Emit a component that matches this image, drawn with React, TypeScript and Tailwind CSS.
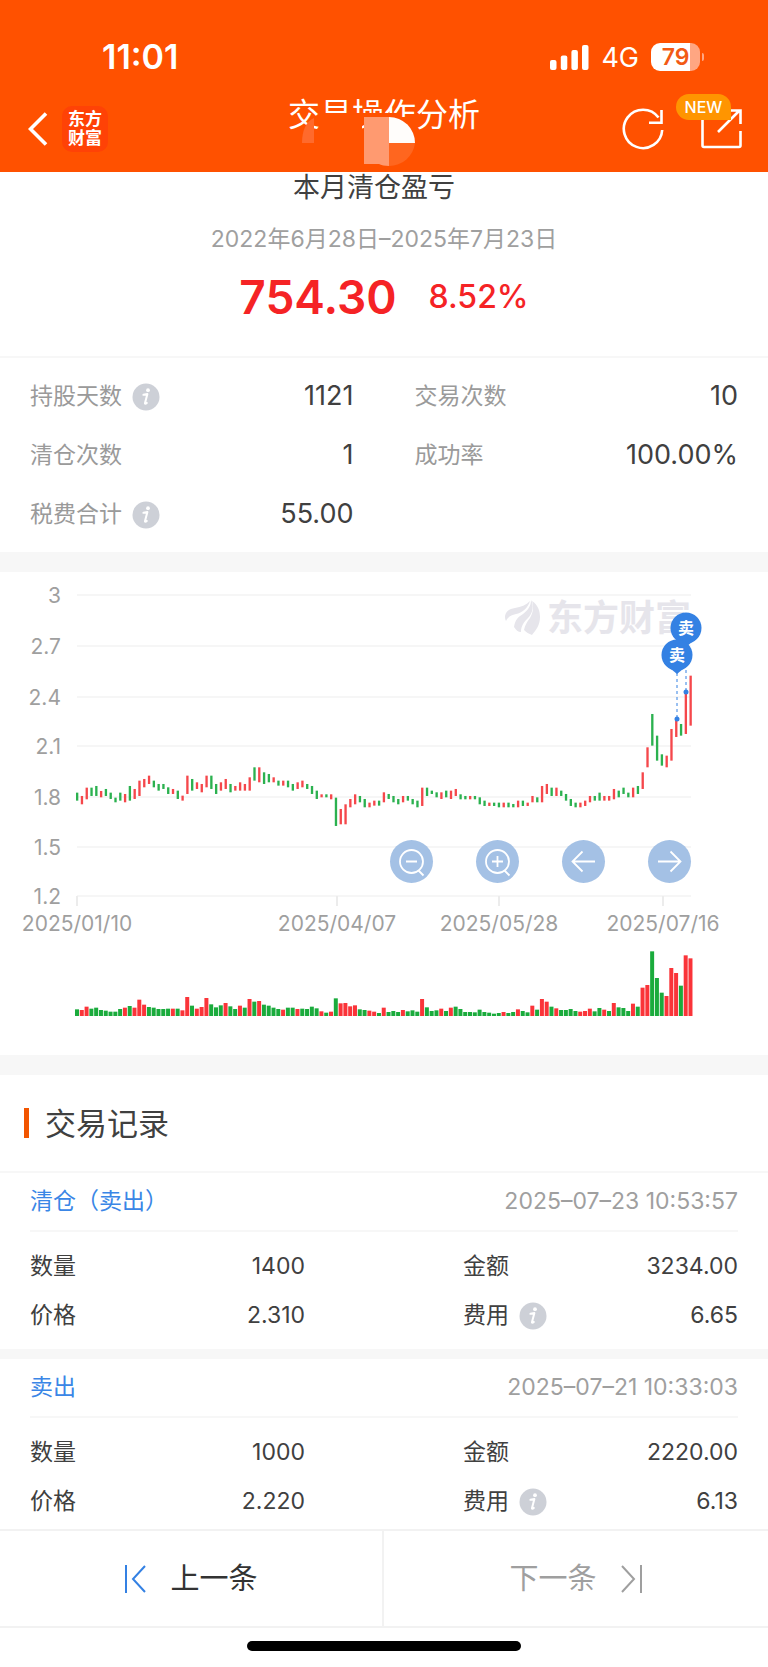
import type { ReactNode } from "react";

type Bar = [high: number, low: number, volume: number];

// y positions of high / low and volume height, one entry per trading day, in chart units
const BARS: Bar[] = [
  [668, 692, 20], [678, 703, 18], [653, 688, 28], [653, 678, 22], [648, 678, 25], [663, 682, 18],
  [657, 678, 16], [668, 687, 13], [683, 697, 13], [668, 692, 21], [672, 697, 25], [648, 692, 30],
  [657, 687, 25], [632, 678, 49], [627, 652, 34], [617, 642, 27], [632, 652, 25], [642, 662, 21],
  [642, 657, 21], [652, 672, 22], [657, 672, 22], [662, 687, 22], [677, 692, 17], [617, 672, 57],
  [627, 662, 31], [637, 657, 22], [642, 667, 27], [617, 652, 54], [617, 657, 35], [642, 672, 26],
  [637, 662, 32], [627, 657, 39], [642, 667, 29], [648, 662, 21], [637, 662, 31], [642, 662, 25],
  [622, 662, 51], [592, 632, 43], [592, 637, 45], [607, 642, 34], [612, 637, 31], [622, 637, 25],
  [632, 647, 21], [632, 647, 19], [632, 652, 25], [642, 662, 25], [637, 657, 21], [632, 652, 22],
  [642, 657, 21], [648, 672, 28], [662, 687, 23], [673, 682, 14], [673, 682, 10], [673, 688, 13],
  [683, 768, 53], [717, 763, 38], [703, 763, 39], [687, 712, 29], [673, 703, 32], [678, 697, 20],
  [687, 712, 18], [698, 712, 16], [692, 707, 13], [692, 707, 9], [667, 697, 25], [672, 687, 12],
  [678, 697, 15], [687, 703, 12], [678, 697, 18], [678, 692, 14], [687, 703, 17], [692, 712, 13],
  [653, 708, 51], [653, 678, 26], [662, 672, 15], [667, 682, 17], [667, 687, 22], [662, 682, 15],
  [662, 687, 25], [657, 678, 28], [673, 688, 21], [678, 688, 12], [678, 688, 12], [678, 688, 11],
  [682, 703, 19], [692, 708, 12], [698, 708, 10], [698, 708, 7], [698, 712, 9], [698, 712, 12],
  [698, 712, 9], [702, 712, 12], [692, 712, 20], [692, 708, 15], [698, 708, 11], [678, 697, 31],
  [682, 697, 19], [648, 697, 51], [642, 672, 43], [653, 678, 28], [653, 678, 23], [662, 678, 18],
  [672, 692, 18], [687, 708, 21], [698, 712, 15], [698, 712, 13], [692, 708, 15], [678, 697, 22],
  [678, 692, 14], [668, 692, 24], [678, 692, 19], [678, 692, 15], [657, 688, 39], [662, 682, 26],
  [653, 672, 24], [668, 682, 15], [653, 682, 37], [648, 672, 28], [607, 657, 85], [532, 592, 93],
  [432, 527, 194], [497, 572, 114], [553, 587, 70], [557, 592, 60], [477, 572, 144], [447, 501, 129],
  [462, 497, 91], [370, 492, 182], [317, 467, 173],
];

const UP_CANDLES = new Set([
  1, 2, 5, 10, 12, 13, 14, 15, 20, 22, 23, 25, 26, 27, 30, 31, 33, 34, 35, 36, 38, 41, 43, 46, 47,
  51, 53, 55, 56, 57, 58, 61, 62, 64, 68, 72, 76, 78, 79, 82, 86, 89, 92, 94, 95, 97, 98, 100, 105,
  106, 107, 110, 111, 112, 116, 118, 119, 123, 124, 125, 127, 128,
]);

const UP_VOLUMES = new Set([
  1, 2, 10, 12, 13, 14, 20, 22, 23, 25, 26, 27, 31, 34, 36, 38, 43, 46, 51, 53, 55, 56, 57, 58, 61,
  62, 64, 68, 72, 76, 78, 89, 92, 95, 97, 98, 100, 105, 106, 107, 110, 112, 116, 118, 119, 123, 124,
  125, 127, 128,
]);

const BAR_STEP = 14.38;

const Y_TICKS = [
  { label: "3", y: 23 },
  { label: "2.7", y: 74 },
  { label: "2.4", y: 125 },
  { label: "2.1", y: 174 },
  { label: "1.8", y: 225 },
  { label: "1.5", y: 275 },
  { label: "1.2", y: 324 },
];

const X_TICKS = [
  { label: "2025/01/10", x: 77 },
  { label: "2025/04/07", x: 337 },
  { label: "2025/05/28", x: 499 },
  { label: "2025/07/16", x: 663 },
];

const RECORDS = [
  { type: "清仓（卖出）", time: "2025–07–23 10:53:57", count: "1400", amount: "3234.00", price: "2.310", fee: "6.65" },
  { type: "卖出", time: "2025–07–21 10:33:03", count: "1000", amount: "2220.00", price: "2.220", fee: "6.13" },
];

function InfoButton({ label }: { label: string }) {
  return (
    <button type="button" aria-label={`${label}说明`} className="ml-[10px] size-7 shrink-0">
      <svg viewBox="0 0 28 28" className="size-7">
        <circle cx="14" cy="14" r="13.5" fill="#cdd0d7" />
        <circle cx="16" cy="7.2" r="1.9" fill="#fff" />
        <path d="M11.4 11.8l4-.7-2.4 9c-.2 1 .5 1 1.8-.2" fill="none" stroke="#fff" strokeWidth="2" strokeLinecap="round" strokeLinejoin="round" />
      </svg>
    </button>
  );
}

function StatusBar() {
  return (
    <div className="flex h-[34px] items-center justify-between pr-16 pl-[102px]">
      <span className="text-[34px] leading-none font-semibold">11:01</span>
      <div className="flex items-center gap-3">
        <svg viewBox="0 0 39 25" className="h-[25px] w-[39px]" fill="#fff">
          <rect x="0" y="15" width="6.5" height="10" rx="2" />
          <rect x="10.8" y="10.5" width="6.5" height="14.5" rx="2" />
          <rect x="21.4" y="5" width="6.5" height="20" rx="2" />
          <rect x="32" y="0" width="6.5" height="25" rx="2" />
        </svg>
        <span className="text-[27px] leading-none">4G</span>
        <div className="flex items-center gap-0.5">
          <div className="flex h-7 w-[49px] items-center justify-center rounded-[9px] bg-linear-to-r from-white from-80% to-[#ffa682] to-80% text-[23px] leading-none font-semibold text-[#f25a14]">
            79
          </div>
          <div className="h-2 w-0.5 rounded-r-full bg-[#ffa682]" />
        </div>
      </div>
    </div>
  );
}

function Header() {
  return (
    <header className="bg-[#ff5100] pt-10 pb-[10px] text-white">
      <StatusBar />
      <div className="mt-[22px] grid h-[66px] grid-cols-[1fr_auto_1fr] items-center px-[26px]">
        <div className="flex items-center gap-[14px] pl-0.5">
          <button type="button" aria-label="返回">
            <svg viewBox="0 0 20 34" className="h-[34px] w-5" fill="none" stroke="#fff" strokeWidth="3.6">
              <path d="M18 1.5L2.5 17L18 32.5" />
            </svg>
          </button>
          <div className="flex size-[46px] flex-col items-center justify-center rounded-[10px] bg-[#ff4206] text-[17px] leading-[19px] font-bold">
            <span>东方</span>
            <span>财富</span>
          </div>
        </div>
        <div className="relative mt-px self-start">
          <h1 className="text-[32px] leading-9">交易操作分析</h1>
          <svg viewBox="0 0 192 70" className="absolute top-0 left-0 h-[70px] w-48" aria-hidden="true">
            <path d="M31 16h78v12H74v40H31z" fill="#ff5100" />
            <path d="M14 46c0-12 4-22 12-25v25z" fill="#ff6a2c" />
            <path d="M101 20h26v26h-26z" fill="#ff5100" />
            <path d="M76 20h25v49c-4 0-8-1-10-2H76z" fill="#ff9a70" />
            <path d="M101 20a26 26 0 0 1 26 26h-26z" fill="#fffdfb" />
            <path d="M101 46h26a26 26 0 0 1-26 23z" fill="#ff661f" />
          </svg>
        </div>
        <div className="flex items-center justify-end gap-9">
          <button type="button" aria-label="刷新">
            <svg viewBox="0 0 42 42" className="size-[42px]" fill="none" stroke="#fff" strokeWidth="2.6">
              <path d="M40.2 22A19.2 19.2 0 1 1 36.5 9.5" />
              <path d="M39.5 2v12.8H27" />
            </svg>
          </button>
          <button type="button" aria-label="分享" className="relative">
            <svg viewBox="0 0 42 42" className="size-[42px]" fill="none" stroke="#fff" strokeWidth="2.6">
              <path d="M2.5 12v25.5a1.5 1.5 0 0 0 1.5 1.5h35a1.5 1.5 0 0 0 1.5-1.5V23" />
              <path d="M18 24L39.5 2.5M28 2.5h12.5V16" />
            </svg>
            <span className="absolute -top-[14px] -left-6 flex h-[26px] w-[55px] items-center justify-center rounded-full rounded-br-sm bg-[#ff9500] text-base leading-none font-medium">
              NEW
            </span>
          </button>
        </div>
      </div>
    </header>
  );
}

function Summary() {
  return (
    <section className="border-b-2 border-[#f7f7f7] pb-8 text-center">
      <h2 className="pt-px pr-5 text-[27px] leading-[30px] text-[#404040]">本月清仓盈亏</h2>
      <p className="mt-[21px] text-[23px] leading-[30px] text-[#9f9f9f]">2022年6月28日–2025年7月23日</p>
      <p className="mt-4 flex items-center justify-center gap-8 font-semibold text-[#f52325]">
        <span className="text-[46px] leading-[54px]">754.30</span>
        <span className="text-[32px] leading-[54px] font-medium">8.52%</span>
      </p>
    </section>
  );
}

function Stat({ label, value, info = false }: { label: string; value: string; info?: boolean }) {
  return (
    <div className="flex h-[59px] items-center">
      <dt className="flex items-center text-[23px] text-[#9a9a9a]">
        {label}
        {info && <InfoButton label={label} />}
      </dt>
      <dd className="ml-auto text-[27px] text-[#404040]">{value}</dd>
    </div>
  );
}

function Stats() {
  return (
    <dl className="grid grid-cols-2 gap-x-[61px] px-[30px] pt-[9px] pb-2">
      <Stat label="持股天数" value="1121" info />
      <Stat label="交易次数" value="10" />
      <Stat label="清仓次数" value="1" />
      <Stat label="成功率" value="100.00%" />
      <Stat label="税费合计" value="55.00" info />
    </dl>
  );
}

function SellPin({ x, y, dotY }: { x: number; y: number; dotY: number }) {
  return (
    <g>
      <line x1={x} x2={x} y1={y + 18} y2={dotY} stroke="#3481e3" strokeDasharray="3 3" />
      <circle cx={x} cy={dotY} r="2.5" fill="#3481e3" />
      <circle cx={x} cy={y} r="15.5" fill="#3481e3" />
      <path d={`M${x - 12} ${y + 9}L${x} ${y + 19}L${x + 12} ${y + 9}z`} fill="#3481e3" />
      <text x={x} y={y + 6} textAnchor="middle" fontSize="16" fontWeight="700" fill="#fff">
        卖
      </text>
    </g>
  );
}

function ChartButton({ label, children }: { label: string; children: ReactNode }) {
  return (
    <button type="button" aria-label={label} className="size-[43px] rounded-full bg-[#a4c1e5]">
      <svg viewBox="0 0 43 43" className="size-[43px]" fill="none" stroke="#fff" strokeWidth="1.8">
        {children}
      </svg>
    </button>
  );
}

function PriceChart() {
  return (
    <section className="relative">
      <svg viewBox="0 0 768 483" className="block h-auto w-full" role="img" aria-label="价格走势">
        {Y_TICKS.map(({ label, y }) => (
          <g key={label}>
            <line x1="77" x2="691" y1={y} y2={y} stroke="#f6f6f6" strokeWidth="2" />
            <text x="61" y={y + 8} textAnchor="end" fontSize="21" fill="#9f9f9f">
              {label}
            </text>
          </g>
        ))}
        {X_TICKS.map(({ label, x }) => (
          <g key={label}>
            <line x1={x} x2={x} y1="324" y2="334" stroke="#ececec" strokeWidth="2" />
            <text x={x} y="359" textAnchor="middle" fontSize="21" fill="#9f9f9f">
              {label}
            </text>
          </g>
        ))}

        <g fill="#e6e5eb">
          <path d="M505 44c1-5 4-7 10-8 6-1 11-3 15-7-2 7-8 12-14 13-5 1-8 3-10 7-1-2-1-3-1-5z" />
          <path d="M514 55c1-7 4-10 9-13 5-4 8-8 8-14 3 5 2 13-3 18-4 4-7 8-7 14-3 0-5-2-7-5z" />
          <path d="M524 58c1-5 3-8 6-12 3-5 4-11 2-17 6 4 8 10 8 16 0 8-4 13-8 18-3-1-6-3-8-5z" />
          <text x="547" y="59" fontSize="36" fontWeight="700">
            东方财富
          </text>
        </g>

        <g transform="translate(0 -2) scale(0.3333)">
          {BARS.map(([high, low], i) => (
            <rect
              key={i}
              x={228 + i * BAR_STEP}
              y={high}
              width="7"
              height={low - high}
              fill={UP_CANDLES.has(i) ? "#f5474b" : "#2bb14f"}
            />
          ))}
        </g>
        <g transform="translate(0 444) scale(0.3333)">
          {BARS.map(([, , volume], i) => (
            <rect
              key={i}
              x={225 + i * BAR_STEP}
              y={-volume}
              width="12"
              height={volume}
              fill={UP_VOLUMES.has(i) ? "#fa3439" : "#1aab3c"}
            />
          ))}
        </g>

        <SellPin x={686} y={56} dotY={120} />
        <SellPin x={677} y={83} dotY={147} />
      </svg>

      <div className="absolute top-[268px] right-[10%] flex gap-[43px]">
        <ChartButton label="缩小">
          <circle cx="21.5" cy="21.5" r="11.5" />
          <path d="M16 21.5h11M28.5 30.5l5 5" />
        </ChartButton>
        <ChartButton label="放大">
          <circle cx="21.5" cy="21.5" r="11.5" />
          <path d="M16 21.5h11M21.5 16v11M28.5 30.5l5 5" />
        </ChartButton>
        <ChartButton label="左移">
          <path d="M33 21.5H10.5M20.5 11.5l-10 10 10 10" />
        </ChartButton>
        <ChartButton label="右移">
          <path d="M10 21.5h22.5M22.5 11.5l10 10-10 10" />
        </ChartButton>
      </div>
    </section>
  );
}

function RecordField({ label, value, info = false }: { label: string; value: string; info?: boolean }) {
  return (
    <div className="flex h-[49px] items-center">
      <dt className="flex items-center">
        {label}
        {info && <InfoButton label={label} />}
      </dt>
      <dd className="ml-auto">{value}</dd>
    </div>
  );
}

function Records() {
  return (
    <section className="text-[23px]">
      <div className="flex h-[98px] items-center gap-4 border-b-2 border-[#f7f7f7] pl-6">
        <span className="h-[30px] w-[5px] bg-[#f25500]" />
        <h2 className="text-[31px] leading-none text-[#404040]">交易记录</h2>
      </div>
      <div className="divide-y-[10px] divide-[#f7f7f7]">
        {RECORDS.map((r) => (
          <article key={r.time} className="px-[30px] pb-[9px] last:pb-[3px]">
            <div className="flex h-[59px] items-center justify-between border-b-2 border-[#f7f7f7]">
              <h3 className="text-[#3a86e6]">{r.type}</h3>
              <time className="text-[#9f9f9f]">{r.time}</time>
            </div>
            <dl className="grid grid-cols-2 gap-x-[158px] pt-[10px] text-[#404040]">
              <RecordField label="数量" value={r.count} />
              <RecordField label="金额" value={r.amount} />
              <RecordField label="价格" value={r.price} />
              <RecordField label="费用" value={r.fee} info />
            </dl>
          </article>
        ))}
      </div>
    </section>
  );
}

function Pager() {
  return (
    <nav className="grid h-[99px] grid-cols-2 border-y-2 border-[#f2f2f2] text-[29px]">
      <button type="button" className="flex items-center justify-center gap-6 border-r-2 border-[#f2f2f2] text-[#333]">
        <svg viewBox="0 0 22 30" className="h-[30px] w-[22px]" fill="none" stroke="#3481e3" strokeWidth="2">
          <path d="M2 1v28M21 2L9 15l12 13" />
        </svg>
        上一条
      </button>
      <button type="button" disabled className="flex items-center justify-center gap-6 text-[#9f9f9f]">
        下一条
        <svg viewBox="0 0 22 30" className="h-[30px] w-[22px]" fill="none" stroke="#9f9f9f" strokeWidth="2">
          <path d="M20 1v28M1 2l12 13L1 28" />
        </svg>
      </button>
    </nav>
  );
}

export default function App() {
  return (
    <main className="bg-white font-['Inter','Noto_Sans_CJK_SC',sans-serif]">
      <Header />
      <Summary />
      <Stats />
      <div className="h-5 bg-[#f7f7f7]" />
      <PriceChart />
      <div className="h-5 bg-[#f7f7f7]" />
      <Records />
      <Pager />
      <div className="flex justify-center pt-[13px] pb-4">
        <div className="h-[10px] w-[274px] rounded-full bg-black" />
      </div>
    </main>
  );
}
